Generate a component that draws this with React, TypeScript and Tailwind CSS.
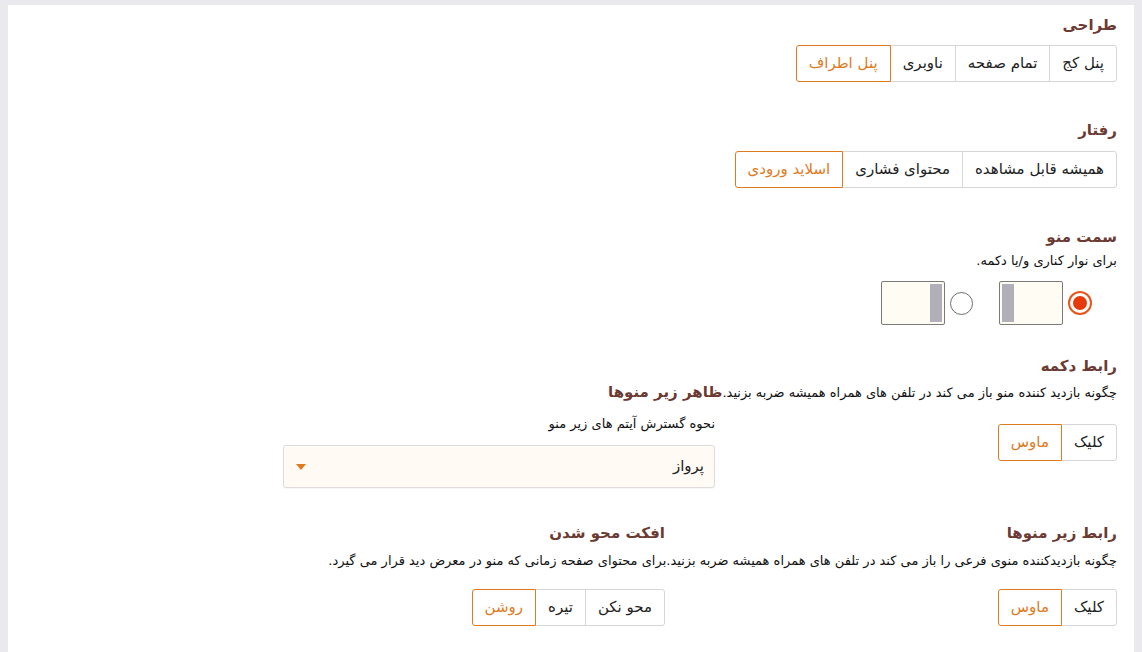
import { useState } from "react";

type SegProps = { options: string[]; value: string; onChange: (v: string) => void };

function Segmented({ options, value, onChange }: SegProps) {
  return (
    <div className="flex">
      {options.map((o, i) => {
        const active = o === value;
        return (
          <button
            key={o}
            onClick={() => onChange(o)}
            className={`h-[37px] px-3 text-[15px] leading-none border ${i > 0 ? "-ms-px" : ""} ${
              i === 0 ? "rounded-r-[3px]" : ""
            } ${i === options.length - 1 ? "rounded-l-[3px]" : ""} ${
              active ? "relative z-10 border-[#e07a1f] text-[#e07a1f] bg-white" : "border-[#d6d6d6] text-[#222] bg-white"
            }`}
          >
            {o}
          </button>
        );
      })}
    </div>
  );
}

function Heading({ children }: { children: React.ReactNode }) {
  return <h3 className="h-6 leading-6 text-[15px] font-bold text-[#6b3a33] whitespace-nowrap">{children}</h3>;
}

function SideBox({ bar }: { bar: "left" | "right" }) {
  return (
    <div className={`flex h-[44px] w-[64px] rounded-[2px] border border-[#7a7a7a] bg-[#fffcf4] p-[2px] ${bar === "left" ? "justify-end" : "justify-start"}`}>
      <div className="w-[12px] h-full bg-[#b1b0b8]" />
    </div>
  );
}

function Radio({ on, onClick }: { on: boolean; onClick: () => void }) {
  return (
    <button
      onClick={onClick}
      className={`flex items-center justify-center rounded-full ${
        on ? "h-[24px] w-[24px] border-2 border-[#e8551c] bg-white" : "h-[23px] w-[23px] border border-[#6e6e6e] bg-white"
      }`}
    >
      {on && <span className="h-[14px] w-[14px] rounded-full bg-[#e63a0b]" />}
    </button>
  );
}

export default function App() {
  const [layout, setLayout] = useState("پنل اطراف");
  const [behavior, setBehavior] = useState("اسلاید ورودی");
  const [side, setSide] = useState("right");
  const [btnLink, setBtnLink] = useState("ماوس");
  const [subLink, setSubLink] = useState("ماوس");
  const [fade, setFade] = useState("روشن");

  return (
    <div className="min-h-screen bg-[#e9e9ee] px-2 pt-[5px] font-['DejaVu_Sans',sans-serif]">
      <div dir="rtl" className="min-h-[647px] bg-white pr-[17px] pl-6 pt-2">
        <Heading>طراحی</Heading>
        <div className="mt-2">
          <Segmented options={["پنل کج", "تمام صفحه", "ناوبری", "پنل اطراف"]} value={layout} onChange={setLayout} />
        </div>

        <div className="mt-9">
          <Heading>رفتار</Heading>
        </div>
        <div className="mt-[9px]">
          <Segmented options={["همیشه قابل مشاهده", "محتوای فشاری", "اسلاید ورودی"]} value={behavior} onChange={setBehavior} />
        </div>

        <div className="mt-[37px]">
          <Heading>سمت منو</Heading>
        </div>
        <p className="mt-[2px] h-5 leading-5 text-[13px] text-[#111]">برای نوار کناری و/یا دکمه.</p>
        <div className="mt-[10px] flex items-center pr-[25px]">
          <Radio on={side === "right"} onClick={() => setSide("right")} />
          <div className="ms-[5px]">
            <SideBox bar="left" />
          </div>
          <div className="ms-[26px]">
            <Radio on={side === "left"} onClick={() => setSide("left")} />
          </div>
          <div className="ms-[5px]">
            <SideBox bar="right" />
          </div>
        </div>

        <div className="mt-[29px]">
          <Heading>رابط دکمه</Heading>
        </div>
        <div className="mt-[2px] flex items-baseline">
          <p className="h-6 leading-6 text-[13px] text-[#111] whitespace-nowrap">
            چگونه بازدید کننده منو باز می کند در تلفن های همراه همیشه ضربه بزنید.
          </p>
          <Heading>ظاهر زیر منوها</Heading>
        </div>
        <div className="flex">
          <div className="w-[402px] pt-[19px]">
            <Segmented options={["کلیک", "ماوس"]} value={btnLink} onChange={setBtnLink} />
          </div>
          <div className="w-[432px] pt-[9px]">
            <p className="h-5 leading-5 text-[13px] text-[#111]">نحوه گسترش آیتم های زیر منو</p>
            <div className="mt-[11px] flex h-[43px] items-center justify-between rounded-[3px] border border-[#dcdcdc] bg-[#fffaf3] pr-[10px] pl-3 shadow-[0_1px_1px_rgba(0,0,0,0.04)]">
              <span className="text-[15px] text-[#222]">پرواز</span>
              <svg width="10" height="6" viewBox="0 0 10 6">
                <path d="M0 0h10L5 6z" fill="#e07a1f" />
              </svg>
            </div>
          </div>
        </div>

        <div className="mt-[33px] flex">
          <div className="w-[452px]">
            <Heading>رابط زیر منوها</Heading>
          </div>
          <Heading>افکت محو شدن</Heading>
        </div>
        <p className="mt-[6px] h-5 leading-5 text-[13px] text-[#111] whitespace-nowrap">
          چگونه بازدیدکننده منوی فرعی را باز می کند در تلفن های همراه همیشه ضربه بزنید.برای محتوای صفحه زمانی که منو در معرض دید قرار می گیرد.
        </p>
        <div className="mt-[18px] flex">
          <div className="w-[452px]">
            <Segmented options={["کلیک", "ماوس"]} value={subLink} onChange={setSubLink} />
          </div>
          <Segmented options={["محو نکن", "تیره", "روشن"]} value={fade} onChange={setFade} />
        </div>
      </div>
    </div>
  );
}
